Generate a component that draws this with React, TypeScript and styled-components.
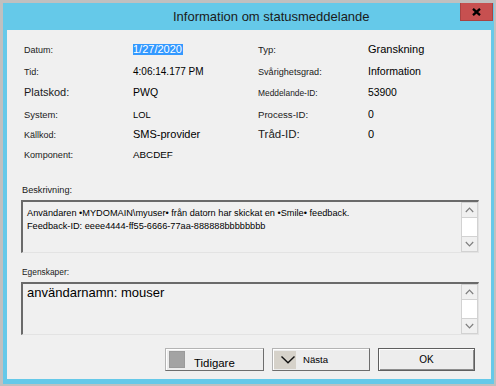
import React from 'react'
import styled, { createGlobalStyle } from 'styled-components'

const GlobalStyle = createGlobalStyle`
  html, body {
    margin: 0;
    padding: 0;
    background: #c0c0c0;
  }
  body {
    font-family: "Liberation Sans", Arial, sans-serif;
  }
`

const Screen = styled.div`
  width: 496px;
  height: 386px;
  box-sizing: border-box;
  padding: 3px 2px 2px 3px;
  background: #c0c0c0;
  display: flex;
`

const Window = styled.div`
  flex: 1;
  display: flex;
  flex-direction: column;
  background: #65c9e9;
  padding-bottom: 5px;
`

const TitleBar = styled.div`
  height: 27px;
  display: flex;
  align-items: flex-start;
`

const Title = styled.div`
  flex: 1;
  padding-left: 170px;
  font-size: 13px;
  line-height: 28px;
  color: #1b1b1b;
  white-space: nowrap;
`

const CloseButton = styled.div`
  width: 33px;
  height: 18px;
  box-sizing: border-box;
  margin-right: 1px;
  background: #c75050;
  border: 1px solid #a84343;
  border-top: none;
  display: flex;
  align-items: center;
  justify-content: center;
`

const Panel = styled.div`
  flex: 1;
  margin: 0 3px 0 4px;
  background: #f0f0f0;
  display: flex;
  flex-direction: column;
  padding-top: 12px;
  box-sizing: border-box;
`

const InfoGrid = styled.div`
  display: grid;
  grid-template-columns: 109px 125px 110px 1fr;
  grid-template-rows: 22px 21px 22px 20px 21px 21px;
  align-items: baseline;
  margin-left: 17px;
`

const Label = styled.span<{ $size: number }>`
  font-size: ${p => p.$size}px;
  line-height: 14px;
  color: #1a1a1a;
  white-space: nowrap;
`

const Value = styled.span<{ $size: number }>`
  font-size: ${p => p.$size}px;
  line-height: 14px;
  color: #000;
  white-space: nowrap;
`

const Selected = styled.span`
  display: inline-block;
  line-height: 11px;
  background: #3399ff;
  color: #fff;
  padding-right: 1px;
`

const SectionLabel = styled.div<{ $size: number; $top: number }>`
  font-size: ${p => p.$size}px;
  line-height: 14px;
  color: #1a1a1a;
  margin: ${p => p.$top}px 0 3px 15px;
`

const TextBox = styled.div`
  height: 53px;
  margin: 0 12px 0 14px;
  box-sizing: border-box;
  border-style: solid;
  border-width: 2px 1px 1px 2px;
  border-color: #6a6a6a #e3e3e3 #e3e3e3 #6a6a6a;
  background: #f0f0f0;
  display: flex;
`

const BoxText = styled.div<{ $size: number; $lh: number; $pt: number }>`
  flex: 1;
  padding: ${p => p.$pt}px 0 0 4px;
  font-size: ${p => p.$size}px;
  line-height: ${p => p.$lh}px;
  color: #000;
  white-space: nowrap;
  overflow: hidden;
`

const Scrollbar = styled.div`
  width: 17px;
  display: flex;
  flex-direction: column;
`

const ScrollButton = styled.div`
  height: 16px;
  box-sizing: border-box;
  border: 1px solid #d2d2d2;
  background: #f0f0f0;
  display: flex;
  align-items: center;
  justify-content: center;
`

const ScrollTrack = styled.div`
  flex: 1;
  background: #fff;
  border-left: 1px solid #d2d2d2;
  border-right: 1px solid #d2d2d2;
`

const ButtonRow = styled.div`
  display: flex;
  justify-content: flex-end;
  gap: 8px;
  margin-top: 13px;
  padding-right: 16px;
`

const Button = styled.div<{ $w: number; $default?: boolean }>`
  width: ${p => p.$w}px;
  height: 23px;
  box-sizing: border-box;
  background: #ededed;
  display: flex;
  align-items: center;
  justify-content: ${p => (p.$default ? 'center' : 'flex-start')};
  border: 1px solid;
  border-color: ${p => (p.$default ? '#5f5f5f' : '#b4b4b4 #6d6d6d #6d6d6d #b4b4b4')};
  box-shadow: ${p =>
    p.$default ? 'inset 1px 1px 0 #fff, inset -1px -1px 0 #8d8d8d' : 'inset 1px 1px 0 #fff'};
  color: #000;
`

const ButtonText = styled.span<{ $size: number; $gap?: number; $drop?: number }>`
  font-size: ${p => p.$size}px;
  margin-left: ${p => p.$gap || 0}px;
  padding-top: ${p => p.$drop || 0}px;
  white-space: nowrap;
`

const Swatch = styled.div`
  width: 16px;
  height: 17px;
  margin-left: 3px;
  background: #a3a3a3;
  box-shadow: inset 0 0 0 1px #9a9a9a;
`

const IconBox = styled.div`
  width: 22px;
  height: 18px;
  margin-left: 1px;
  background: #d6d2ca;
  display: flex;
`

type Cell = { text: string; size: number; selected?: boolean }

const rows: [Cell, Cell, Cell?, Cell?][] = [
  [{ text: 'Datum:', size: 9 }, { text: '1/27/2020', size: 11, selected: true }, { text: 'Typ:', size: 9.5 }, { text: 'Granskning', size: 11 }],
  [{ text: 'Tid:', size: 9 }, { text: '4:06:14.177 PM', size: 10 }, { text: 'Svårighetsgrad:', size: 9.1 }, { text: 'Information', size: 10.6 }],
  [{ text: 'Platskod:', size: 11 }, { text: 'PWQ', size: 10.5 }, { text: 'Meddelande-ID:', size: 8.4 }, { text: '53900', size: 10.4 }],
  [{ text: 'System:', size: 9.4 }, { text: 'LOL', size: 9.3 }, { text: 'Process-ID:', size: 9.6 }, { text: '0', size: 10.5 }],
  [{ text: 'Källkod:', size: 9 }, { text: 'SMS-provider', size: 11 }, { text: 'Tråd-ID:', size: 11.5 }, { text: '0', size: 11 }],
  [{ text: 'Komponent:', size: 9.1 }, { text: 'ABCDEF', size: 9.8 }],
]

const Chevron = ({ up }: { up?: boolean }) => (
  <svg width="9" height="6" viewBox="0 0 9 6">
    <polyline
      points={up ? '0.8,5 4.5,1.2 8.2,5' : '0.8,1 4.5,4.8 8.2,1'}
      fill="none"
      stroke="#7f7f7f"
      strokeWidth="1.2"
    />
  </svg>
)

const Scroll = () => (
  <Scrollbar>
    <ScrollButton>
      <Chevron up />
    </ScrollButton>
    <ScrollTrack />
    <ScrollButton>
      <Chevron />
    </ScrollButton>
  </Scrollbar>
)

export default function App() {
  return (
    <Screen>
      <GlobalStyle />
      <Window>
        <TitleBar>
          <Title>Information om statusmeddelande</Title>
          <CloseButton>
            <svg width="9" height="8" viewBox="0 0 9 8">
              <path d="M1 0.8 L8 7.2 M8 0.8 L1 7.2" stroke="#000" strokeWidth="2.3" />
            </svg>
          </CloseButton>
        </TitleBar>
        <Panel>
          <InfoGrid>
            {rows.map((row, i) =>
              row.map((cell, j) => {
                if (!cell) return null
                const isLabel = j % 2 === 0
                if (isLabel) {
                  return (
                    <Label key={`${i}-${j}`} $size={cell.size}>
                      {cell.text}
                    </Label>
                  )
                }
                return (
                  <Value key={`${i}-${j}`} $size={cell.size}>
                    {cell.selected ? <Selected>{cell.text}</Selected> : cell.text}
                  </Value>
                )
              })
            )}
          </InfoGrid>

          <SectionLabel $size={9.2} $top={14}>Beskrivning:</SectionLabel>
          <TextBox>
            <BoxText $size={9.2} $lh={13.3} $pt={5}>
              <div>Användaren •MYDOMAIN\myuser• från datorn har skickat en •Smile• feedback.</div>
              <div>Feedback-ID: eeee4444-ff55-6666-77aa-888888bbbbbbbb</div>
            </BoxText>
            <Scroll />
          </TextBox>

          <SectionLabel $size={8.4} $top={12}>Egenskaper:</SectionLabel>
          <TextBox>
            <BoxText $size={13} $lh={16} $pt={1}>
              användarnamn: mouser
            </BoxText>
            <Scroll />
          </TextBox>

          <ButtonRow>
            <Button $w={99}>
              <Swatch />
              <ButtonText $size={11.4} $gap={9} $drop={6}>Tidigare</ButtonText>
            </Button>
            <Button $w={98}>
              <IconBox>
                <svg width="22" height="18" viewBox="0 0 22 18">
                  <polyline points="7.5,5.5 14,11.8 20.5,5.5" fill="none" stroke="#111" strokeWidth="1.4" />
                </svg>
              </IconBox>
              <ButtonText $size={9.6} $gap={7}>Nästa</ButtonText>
            </Button>
            <Button $w={97} $default>
              <ButtonText $size={10}>OK</ButtonText>
            </Button>
          </ButtonRow>
        </Panel>
      </Window>
    </Screen>
  )
}
